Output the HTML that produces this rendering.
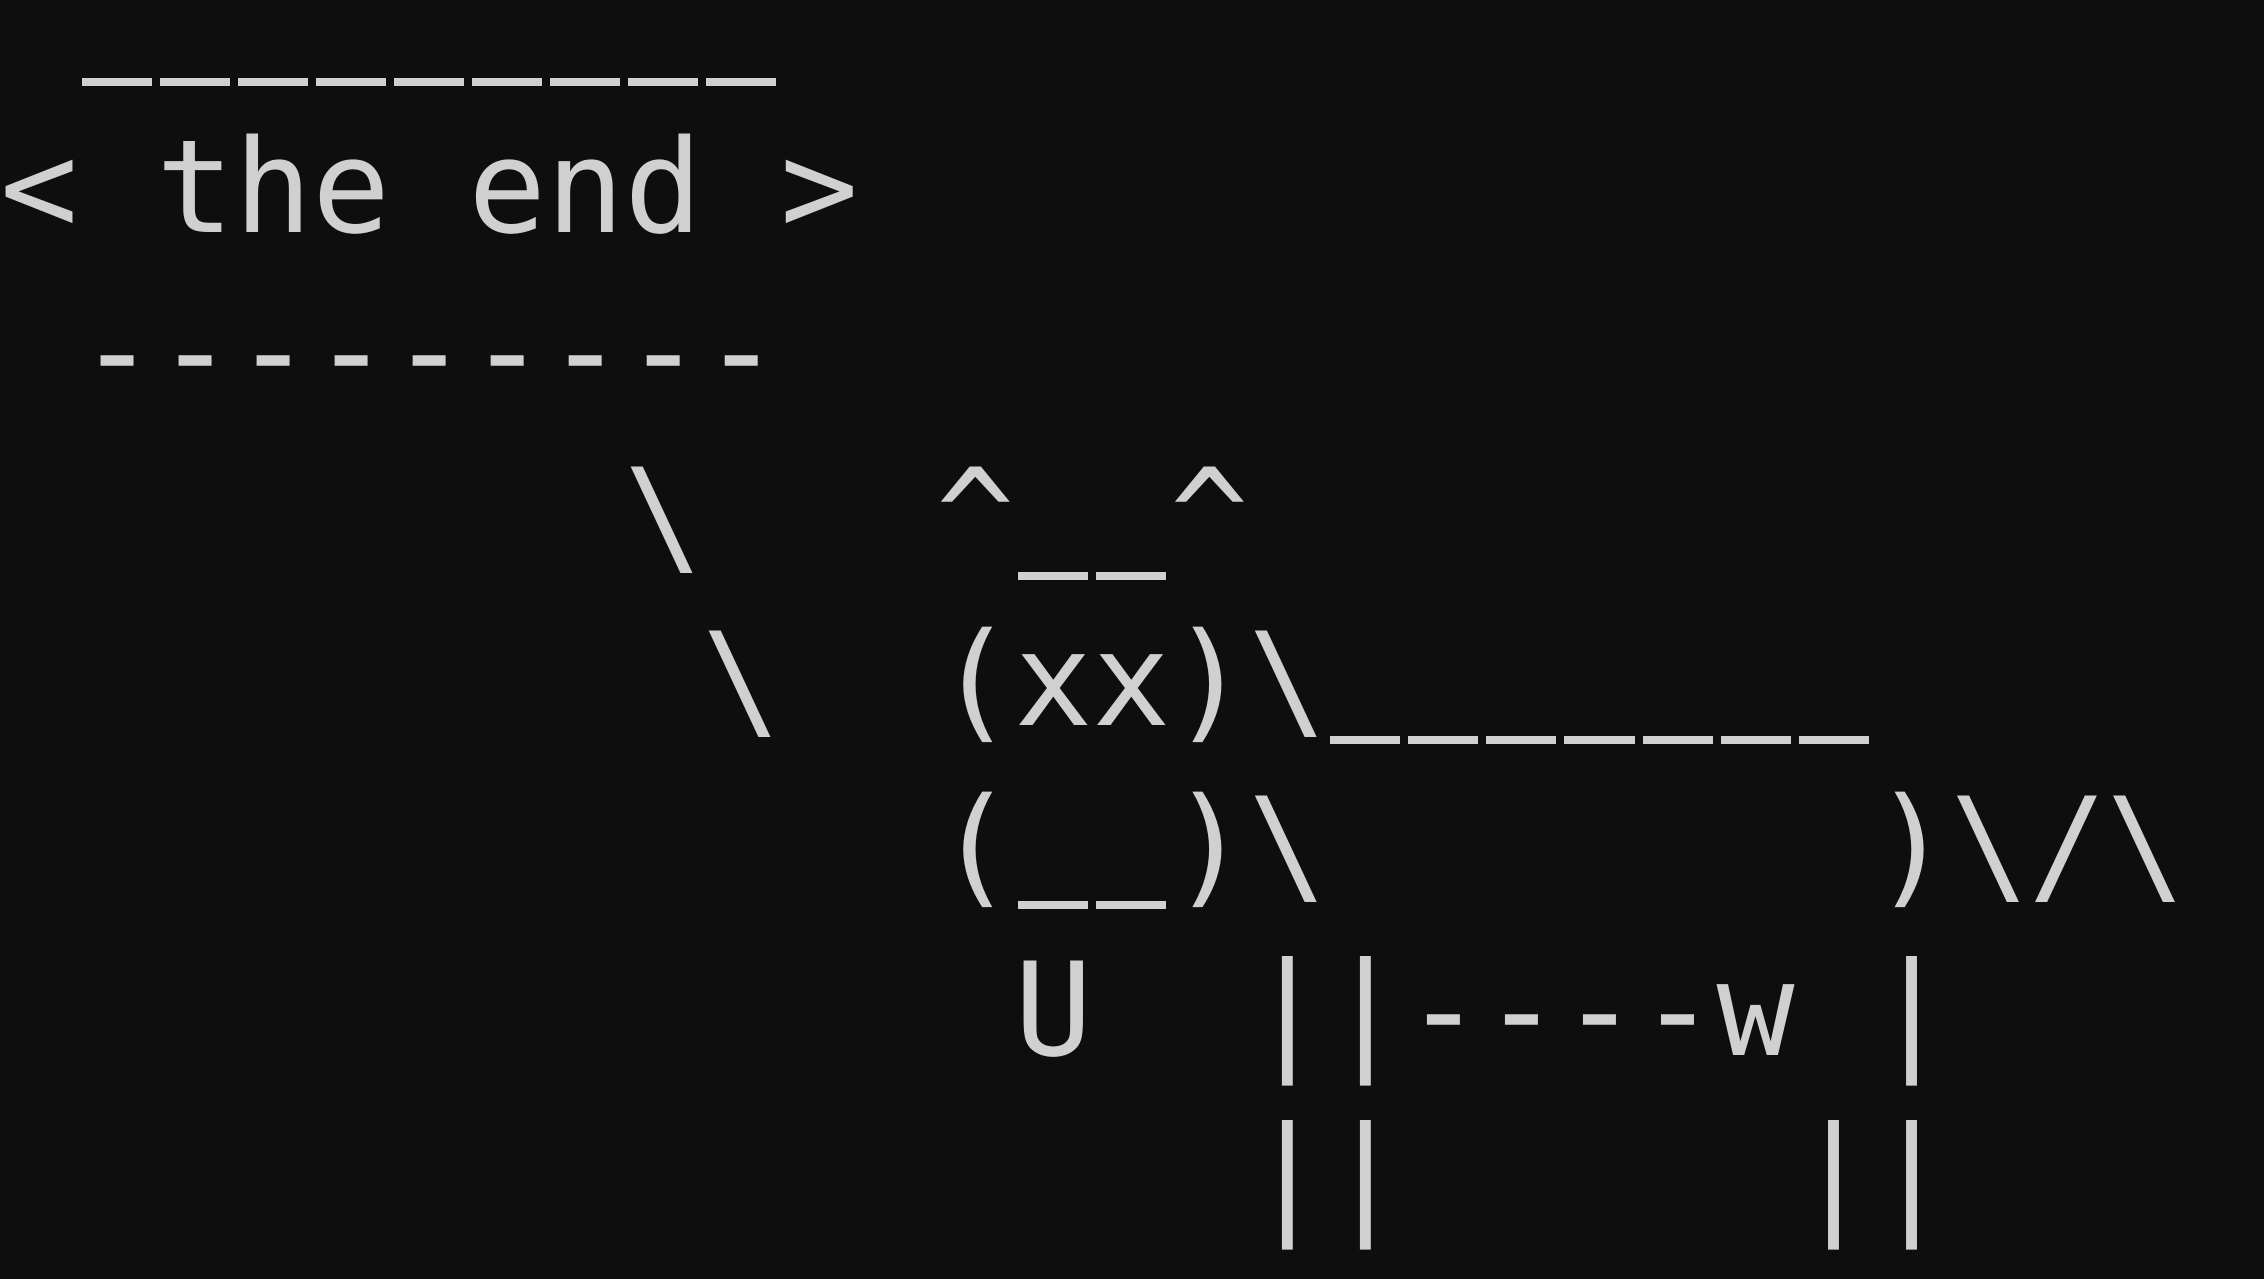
<!DOCTYPE html>
<html><head><meta charset="utf-8"><style>
html,body{margin:0;padding:0;background:#0e0e0e;width:2264px;height:1279px;overflow:hidden}
pre{position:absolute;left:0;top:-59px;margin:0;font-family:"DejaVu Sans Mono","Liberation Mono",monospace;font-size:129.6px;line-height:164.6px;color:#d0d0d0;white-space:pre}
.u{color:transparent;position:relative;display:inline-block;height:164.6px;vertical-align:top}
.u::after{content:"";position:absolute;left:4px;right:4px;top:137px;height:8px;background:#d0d0d0}
</style></head><body><pre> <span class=u>_</span><span class=u>_</span><span class=u>_</span><span class=u>_</span><span class=u>_</span><span class=u>_</span><span class=u>_</span><span class=u>_</span><span class=u>_</span>
&lt; the end &gt;
 ---------
        \   ^<span class=u>_</span><span class=u>_</span>^
         \  (xx)\<span class=u>_</span><span class=u>_</span><span class=u>_</span><span class=u>_</span><span class=u>_</span><span class=u>_</span><span class=u>_</span>
            (<span class=u>_</span><span class=u>_</span>)\       )\/\
             U  ||----w |
                ||     ||</pre></body></html>
